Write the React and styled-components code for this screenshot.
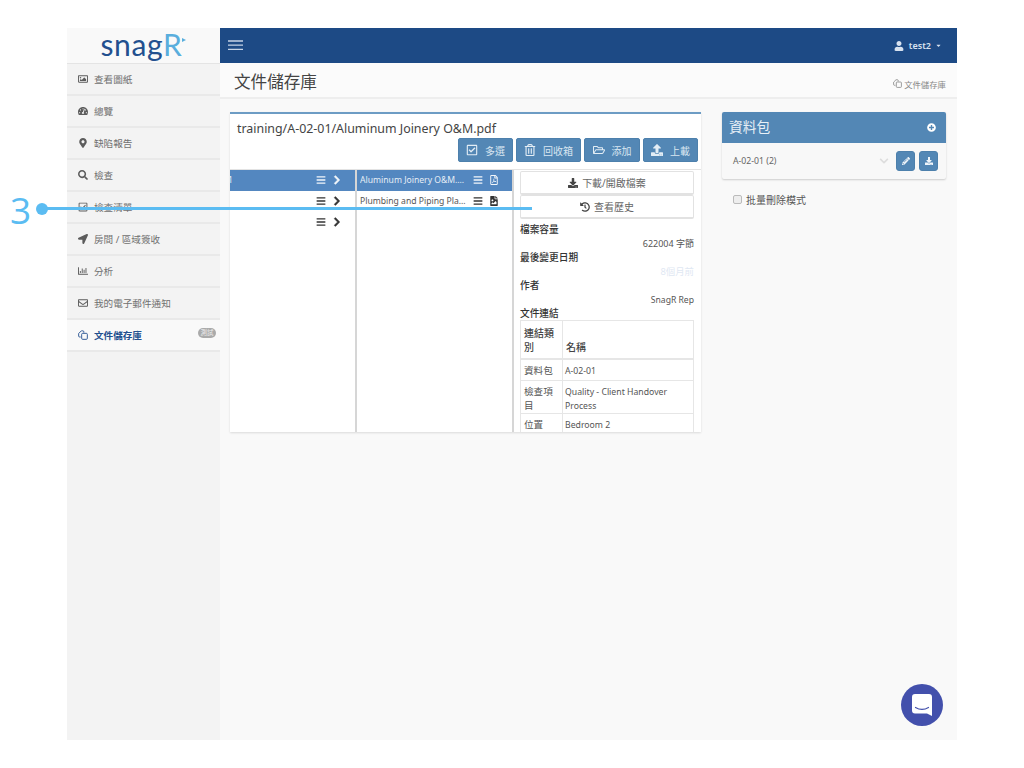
import React from 'react'
import styled, {createGlobalStyle} from 'styled-components'
import {
  FaRegImage, FaTachometerAlt, FaMapMarkerAlt, FaSearch, FaRegCheckSquare, FaLocationArrow,
  FaRegChartBar, FaRegEnvelope, FaBars, FaChevronRight, FaRegFilePdf, FaFileImage,
  FaDownload, FaUpload, FaRegTrashAlt, FaRegFolderOpen, FaHistory, FaPencilAlt, FaPlusCircle,
  FaChevronDown, FaUser, FaCaretDown,
} from 'react-icons/fa'

const FONT = `"Noto Sans", "Noto Sans CJK TC", sans-serif`

const Global = createGlobalStyle`
  html, body { margin: 0; background: #fff; }
  body { font-family: ${FONT}; color: #555; }
  * { box-sizing: border-box; }
`

const Page = styled.div`
  position: relative;
  width: 1024px;
  height: 768px;
  padding: 28px 67px;
  overflow: hidden;
`

const Frame = styled.div`
  display: grid;
  grid-template-columns: 153px 1fr;
  height: 712px;
  background: #f9f9f9;
`

const Sidebar = styled.nav`
  background: #f3f3f3;
  display: flex;
  flex-direction: column;
`

const Logo = styled.div`
  height: 36px;
  display: flex;
  align-items: center;
  justify-content: center;
  background: #f9f9f9;
  border-bottom: 1px solid #e4e4e4;
  font-family: "Lato", sans-serif;
  font-size: 30px;
  line-height: 1;
  letter-spacing: 0.6px;
  color: #23508f;
  padding: 0 4px 4px 0;
`

const LogoR = styled.span`
  position: relative;
  color: #5aaedd;
  &::after {
    content: '';
    position: absolute;
    right: -3px;
    top: 9px;
    border-left: 4px solid #5aaedd;
    border-top: 2px solid transparent;
    border-bottom: 2px solid transparent;
  }
`

const NavItem = styled.a`
  height: 32px;
  flex: none;
  display: flex;
  align-items: center;
  padding: 0 4px 1px 11px;
  border-bottom: 2px solid #e9e9e9;
  font-size: 9.6px;
  color: ${p => (p.$active ? '#23508f' : '#707070')};
  font-weight: ${p => (p.$active ? 700 : 400)};
  background: ${p => (p.$active ? '#f9f9f9' : 'transparent')};
  svg { width: 10px; height: 10px; margin-right: 6px; flex: none; color: ${p => (p.$active ? '#23508f' : '#5c5c5c')}; }
`

const Badge = styled.span`
  margin-left: auto;
  margin-top: -3px;
  background: #aaa;
  color: #eee;
  border-radius: 6px;
  font-size: 6.5px;
  line-height: 10px;
  padding: 0 2.5px;
  font-weight: 400;
`

const Main = styled.main`
  display: flex;
  flex-direction: column;
  min-width: 0;
`

const TopBar = styled.header`
  height: 35px;
  background: #1d4a85;
  color: #d8e2ef;
  display: flex;
  align-items: center;
  justify-content: space-between;
  padding: 0 15px 0 8px;
`

const UserMenu = styled.div`
  display: flex;
  align-items: center;
  font-size: 9px;
  font-weight: 600;
  gap: 5px;
  svg:first-child { width: 10px; height: 10px; }
  svg:last-child { width: 7px; height: 7px; margin-left: -1px; }
`

const PageHead = styled.div`
  height: 36px;
  background: #fbfbfb;
  border-bottom: 2px solid #eeeeee;
  display: flex;
  align-items: center;
  justify-content: space-between;
  padding: 4px 11px 0 14px;
`

const PageTitle = styled.h1`
  margin: 0;
  font-size: 16.6px;
  line-height: 1;
  font-weight: 400;
  color: #444;
`

const Crumb = styled.div`
  display: flex;
  align-items: center;
  gap: 2px;
  font-size: 8.4px;
  color: #888;
  padding-top: 3px;
  svg { width: 9px; height: 9px; }
`

const Content = styled.div`
  display: flex;
  align-items: flex-start;
  padding: 13px 11px 0 10px;
  gap: 21px;
`

const FilesPanel = styled.section`
  width: 471px;
  height: 320px;
  flex: none;
  background: #fff;
  border-top: 2px solid #6d9cc4;
  box-shadow: 0 1px 2px rgba(0, 0, 0, 0.12);
  display: flex;
  flex-direction: column;
  overflow: hidden;
`

const PanelHead = styled.div`
  height: 56px;
  flex: none;
  padding: 7px 3px 0 7px;
  border-bottom: 1px solid #e3e3e3;
`

const Path = styled.div`
  font-size: 12.4px;
  line-height: 15px;
  color: #444;
`

const Toolbar = styled.div`
  display: flex;
  justify-content: flex-end;
  gap: 3px;
  margin-top: 2px;
`

const ToolButton = styled.button`
  height: 24px;
  width: ${p => p.$w}px;
  display: flex;
  align-items: center;
  justify-content: center;
  gap: 7px;
  padding: 0;
  border: 1px solid #4d80ac;
  border-radius: 2px;
  background: #5387b5;
  color: #d9e6f1;
  font: 10px ${FONT};
  svg { width: 12px; height: 12px; color: #e3edf5; }
`

const Columns = styled.div`
  flex: 1;
  min-height: 0;
  display: grid;
  grid-template-columns: 127px 157px 1fr;
`

const Column = styled.div`
  border-right: 2px solid #d6d6d6;
  &:last-child { border-right: 0; }
  min-width: 0;
`

const TreeRow = styled.div`
  height: 21px;
  display: flex;
  align-items: center;
  justify-content: flex-end;
  padding: 0 13px 2px ${p => p.$left || 0}px;
  gap: 6px;
  background: ${p => (p.$selected ? '#5387c0' : 'transparent')};
  color: ${p => (p.$selected ? '#f2f6fa' : '#333')};
  font-size: 8.6px;
  svg { flex: none; width: 10px; height: 10px; }
`

const Chevron = styled(FaChevronRight)`
  stroke: currentColor;
  stroke-width: 30;
`

const ClippedName = styled.span`
  margin: 0 auto 0 -2px;
`

const FileName = styled.span`
  flex: 1;
  min-width: 0;
  white-space: nowrap;
  overflow: hidden;
  text-overflow: ellipsis;
  color: ${p => (p.$selected ? '#e6eef6' : '#555')};
`

const Details = styled.div`
  padding: 1px 7px 0 6px;
  overflow: hidden;
  height: 100%;
`

const WideButton = styled.button`
  width: 100%;
  height: 24px;
  display: flex;
  align-items: center;
  justify-content: center;
  gap: 4px;
  padding: 0;
  background: #fff;
  border: 1px solid #e2e2e2;
  border-bottom-width: 2px;
  border-radius: 2px;
  color: #666;
  font: 10px ${FONT};
  svg { width: 10px; height: 10px; color: #444; }
`

const Label = styled.div`
  font-size: 9.7px;
  font-weight: 500;
  line-height: 14px;
  color: #333;
  margin-top: ${p => p.$top || 0}px;
`

const Value = styled.div`
  font-size: ${p => p.$size || 9}px;
  line-height: 14px;
  text-align: right;
  color: ${p => (p.$faint ? '#dfe8f3' : '#555')};
`

const LinkTable = styled.table`
  width: 100%;
  margin-top: -1px;
  border-collapse: collapse;
  font-size: 9.6px;
  line-height: 14px;
  color: #555;
  table-layout: fixed;
  td, th { border: 1px solid #e6e6e6; padding: 4px 3px 2px; font-weight: 400; text-align: left; vertical-align: top; }
  td:last-child { font-size: 8.7px; padding-left: 2px; }
  th { vertical-align: bottom; font-weight: 500; font-size: 10px; color: #444; border-bottom-width: 2px; padding: 5px 3px 4px; }
  tbody tr:nth-child(2) td { padding-bottom: 0; }
`

const Aside = styled.aside`
  flex: 1;
  min-width: 0;
`

const PackCard = styled.section`
  background: #f8f8f8;
  border-radius: 2px;
  padding-bottom: 1px;
  box-shadow: 0 1px 2px rgba(0, 0, 0, 0.18);
  overflow: hidden;
`

const PackHead = styled.div`
  height: 31px;
  background: #5387b5;
  color: #e8f0f7;
  display: flex;
  align-items: center;
  justify-content: space-between;
  padding: 0 10px 3px 7px;
  font-size: 13.7px;
  svg { width: 9px; height: 9px; color: #fff; margin-top: 3px; }
`

const PackRow = styled.div`
  height: 35px;
  display: flex;
  align-items: center;
  padding: 0 8px 0 11px;
  font-size: 8.7px;
  color: #666;
  gap: 4px;
  > svg { width: 10px; height: 10px; color: #ddd; margin-left: auto; margin-right: 3px; }
`

const SmallButton = styled.button`
  width: 19px;
  height: 20px;
  padding: 0;
  display: flex;
  align-items: center;
  justify-content: center;
  background: #5387b5;
  border: 1px solid #4d80ac;
  border-radius: 3px;
  color: #f0f5fa;
  svg { width: 8px; height: 8px; }
`

const CheckRow = styled.label`
  display: flex;
  align-items: center;
  gap: 4px;
  margin: 13px 0 0 11px;
  font-size: 10px;
  color: #555;
`

const CheckBox = styled.span`
  width: 9px;
  height: 9px;
  background: #eee;
  border: 1px solid #bbb;
  border-radius: 2px;
`

const ChatBubble = styled.div`
  position: absolute;
  left: 901px;
  top: 684px;
  width: 42px;
  height: 42px;
  border-radius: 50%;
  background: #4350ac;
  display: flex;
  align-items: center;
  justify-content: center;
`

const CalloutNumber = styled.div`
  position: absolute;
  left: 10px;
  top: 189px;
  font-family: "Open Sans", sans-serif;
  font-size: 37px;
  line-height: 42px;
  font-weight: 400;
  color: #5bbcf2;
`

const CalloutDot = styled.div`
  position: absolute;
  left: 36px;
  top: 203px;
  width: 12px;
  height: 12px;
  border-radius: 50%;
  background: #5bbcf2;
`

const CalloutLine = styled.div`
  position: absolute;
  left: 42px;
  top: 207px;
  width: 490px;
  height: 3px;
  background: #5bbcf2;
`

const Burger = () => (
  <svg width="15" height="11" viewBox="0 0 15 11">
    <path d="M0 1h15M0 5.2h15M0 9.4h15" stroke="#c6d4e6" strokeWidth="1.3" />
  </svg>
)

const DocsIcon = () => (
  <svg viewBox="0 0 12 12" fill="none" stroke="currentColor" strokeWidth="1.1" strokeLinejoin="round">
    <path d="M3.2 8.4H2a1.2 1.2 0 0 1-1.2-1.2V4.2L4 1h1.8A1.2 1.2 0 0 1 7 2.2v1" />
    <rect x="4.4" y="4" width="6.8" height="7.2" rx="1.2" />
  </svg>
)

const NAV = [
  [FaRegImage, '查看圖紙'],
  [FaTachometerAlt, '總覽'],
  [FaMapMarkerAlt, '缺陷報告'],
  [FaSearch, '檢查'],
  [FaRegCheckSquare, '檢查清單'],
  [FaLocationArrow, '房間 / 區域簽收'],
  [FaRegChartBar, '分析'],
  [FaRegEnvelope, '我的電子郵件通知'],
]

const TOOLS = [
  [FaRegCheckSquare, '多選', 55],
  [FaRegTrashAlt, '回收箱', 65],
  [FaRegFolderOpen, '添加', 56],
  [FaUpload, '上載', 55],
]

export default function App() {
  return (
    <Page>
      <Global />
      <Frame>
        <Sidebar>
          <Logo>snag<LogoR>R</LogoR></Logo>
          {NAV.map(([Icon, label]) => (
            <NavItem key={label}><Icon />{label}</NavItem>
          ))}
          <NavItem $active><DocsIcon />文件儲存庫<Badge>測試</Badge></NavItem>
        </Sidebar>
        <Main>
          <TopBar>
            <Burger />
            <UserMenu><FaUser />test2<FaCaretDown /></UserMenu>
          </TopBar>
          <PageHead>
            <PageTitle>文件儲存庫</PageTitle>
            <Crumb><DocsIcon />文件儲存庫</Crumb>
          </PageHead>
          <Content>
            <FilesPanel>
              <PanelHead>
                <Path>training/A-02-01/Aluminum Joinery O&amp;M.pdf</Path>
                <Toolbar>
                  {TOOLS.map(([Icon, label, w]) => (
                    <ToolButton key={label} $w={w}><Icon />{label}</ToolButton>
                  ))}
                </Toolbar>
              </PanelHead>
              <Columns>
                <Column>
                  <TreeRow $selected>
                    <ClippedName>1</ClippedName>
                    <FaBars />
                    <Chevron />
                  </TreeRow>
                  <TreeRow><FaBars /><Chevron /></TreeRow>
                  <TreeRow><FaBars /><Chevron /></TreeRow>
                </Column>
                <Column>
                  <TreeRow $selected $left={3}>
                    <FileName $selected>Aluminum Joinery O&amp;M.pdf document</FileName>
                    <FaBars />
                    <FaRegFilePdf />
                  </TreeRow>
                  <TreeRow $left={3}>
                    <FileName>Plumbing and Piping Plan.pdf</FileName>
                    <FaBars />
                    <FaFileImage />
                  </TreeRow>
                </Column>
                <Column>
                  <Details>
                    <WideButton><FaDownload />下載/開啟檔案</WideButton>
                    <WideButton><FaHistory />查看歷史</WideButton>
                    <Label $top={4}>檔案容量</Label>
                    <Value>622004 字節</Value>
                    <Label>最後變更日期</Label>
                    <Value $faint $size={9.4}>8個月前</Value>
                    <Label>作者</Label>
                    <Value $size={8.6}>SnagR Rep</Value>
                    <Label>文件連結</Label>
                    <LinkTable>
                      <colgroup><col style={{width: 42}} /><col /></colgroup>
                      <thead>
                        <tr><th>連結類別</th><th>名稱</th></tr>
                      </thead>
                      <tbody>
                        <tr><td>資料包</td><td>A-02-01</td></tr>
                        <tr><td>檢查項目</td><td>Quality - Client Handover Process</td></tr>
                        <tr><td>位置</td><td>Bedroom 2</td></tr>
                      </tbody>
                    </LinkTable>
                  </Details>
                </Column>
              </Columns>
            </FilesPanel>
            <Aside>
              <PackCard>
                <PackHead>資料包<FaPlusCircle /></PackHead>
                <PackRow>
                  A-02-01 (2)
                  <FaChevronDown />
                  <SmallButton><FaPencilAlt /></SmallButton>
                  <SmallButton><FaDownload /></SmallButton>
                </PackRow>
              </PackCard>
              <CheckRow><CheckBox />批量刪除模式</CheckRow>
            </Aside>
          </Content>
        </Main>
      </Frame>
      <ChatBubble>
        <svg width="20" height="22" viewBox="0 0 20 22">
          <path d="M3 0h14a3 3 0 0 1 3 3v19l-5-2.5H3a3 3 0 0 1-3-3V3a3 3 0 0 1 3-3z" fill="#fff" />
          <path d="M3.5 13.5c4 2.4 9 2.4 13 0" fill="none" stroke="#4350ac" strokeWidth="1.2" strokeLinecap="round" />
        </svg>
      </ChatBubble>
      <CalloutNumber>3</CalloutNumber>
      <CalloutLine />
      <CalloutDot />
    </Page>
  )
}
